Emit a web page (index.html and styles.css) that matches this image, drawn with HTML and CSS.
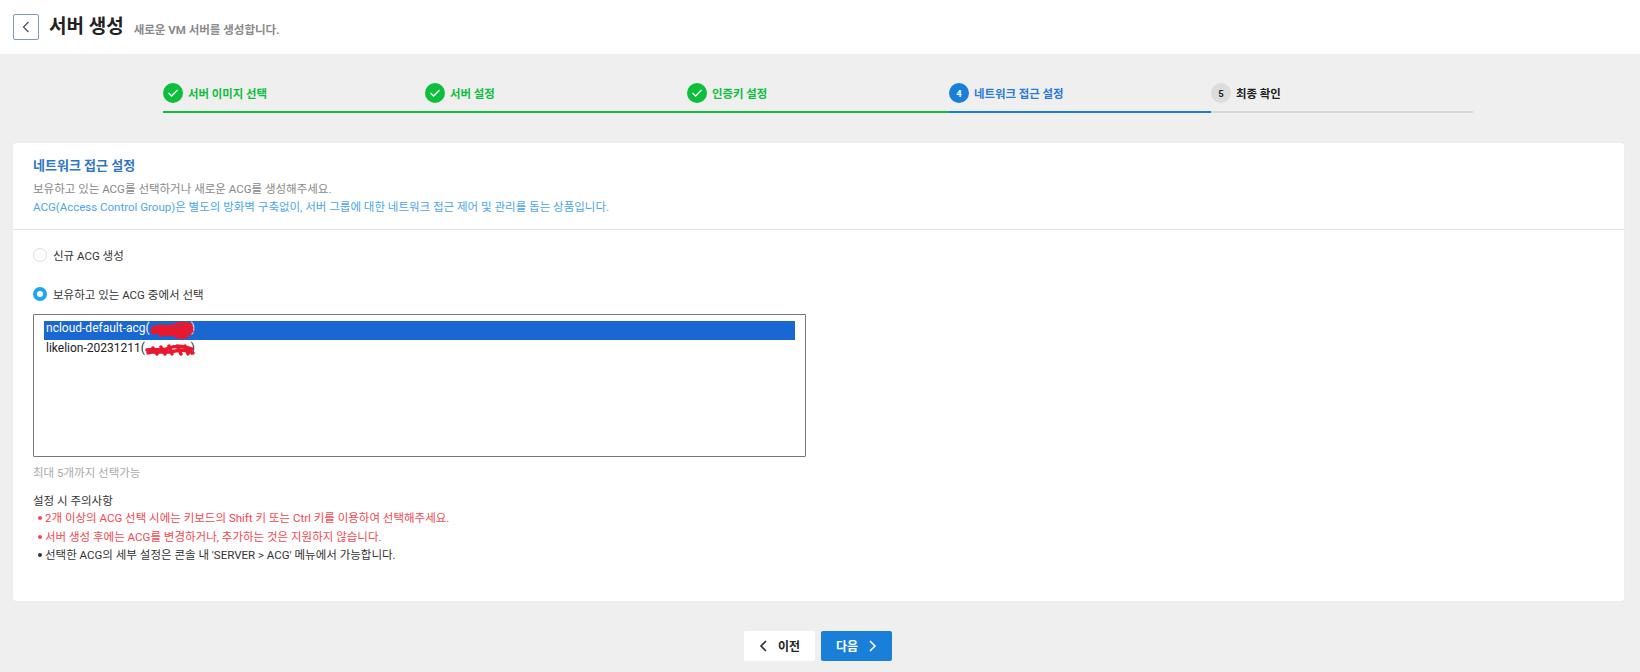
FILE: index.html
```html
<!DOCTYPE html>
<html lang="ko">
<head>
<meta charset="utf-8">
<title>서버 생성</title>
<link rel="stylesheet" href="styles.css">
</head>
<body>
<header class="topbar">
  <button class="back" type="button" aria-label="뒤로">
    <svg width="10" height="14" viewBox="0 0 10 14"><path d="M7.5 2 L2.5 7 L7.5 12" fill="none" stroke="#44505c" stroke-width="1.2"/></svg>
  </button>
  <h1 class="title">서버 생성</h1>
  <span class="subtitle">새로운 VM 서버를 생성합니다.</span>
</header>

<ol class="steps">
  <li class="step done"><span class="badge"><svg width="12" height="10" viewBox="0 0 12 10"><path d="M1.5 5 L4.6 8 L10.5 2" fill="none" stroke="#fff" stroke-width="1.3"/></svg></span>서버 이미지 선택</li>
  <li class="step done"><span class="badge"><svg width="12" height="10" viewBox="0 0 12 10"><path d="M1.5 5 L4.6 8 L10.5 2" fill="none" stroke="#fff" stroke-width="1.3"/></svg></span>서버 설정</li>
  <li class="step done"><span class="badge"><svg width="12" height="10" viewBox="0 0 12 10"><path d="M1.5 5 L4.6 8 L10.5 2" fill="none" stroke="#fff" stroke-width="1.3"/></svg></span>인증키 설정</li>
  <li class="step current"><span class="badge">4</span>네트워크 접근 설정</li>
  <li class="step todo"><span class="badge">5</span>최종 확인</li>
</ol>

<main class="card">
  <section class="card-head">
    <h2 class="card-title">네트워크 접근 설정</h2>
    <p class="desc">보유하고 있는 ACG를 선택하거나 새로운 ACG를 생성해주세요.</p>
    <p class="desc desc-blue">ACG(Access Control Group)은 별도의 방화벽 구축없이, 서버 그룹에 대한 네트워크 접근 제어 및 관리를 돕는 상품입니다.</p>
  </section>
  <section class="card-body">
    <div class="radio"><span class="dot"></span>신규 ACG 생성</div>
    <div class="radio radio-on"><span class="dot"></span>보유하고 있는 ACG 중에서 선택</div>
    <div class="listbox">
      <div class="option selected">ncloud-default-acg(<span class="masked"><svg class="scribble" width="46" height="20" viewBox="0 0 46 20"><path d="M3 8 C10 4 16 8 22 6 C30 2 36 3 41 5 M2 10 C10 7 20 11 30 8 C36 6 40 7 42 8 M3 13 C12 10 22 14 32 11 C36 10 40 10 42 11 M10 15 C16 13 24 16 32 14 C36 13 38 14 40 14 M26 16 C28 17 32 18 36 17 M10 7 L14 15 M18 6 L22 15 M28 4 L32 17 M36 4 L37 15" fill="none" stroke="#e8192f" stroke-width="3.2" stroke-linecap="round"/></svg></span>)</div>
      <div class="option">likelion-20231211(<span class="masked masked-2"><svg class="scribble" width="50" height="14" viewBox="0 0 50 14"><path d="M2 7 C10 5 16 9 24 5 C32 2 40 3 47 6 M3 10 C12 7 20 11 30 8 C36 6 42 7 48 10 M8 5 L12 11 M16 4 L20 11 M24 3 L27 11 M32 3 L36 11 M40 3 L43 11" fill="none" stroke="#e8192f" stroke-width="3.4" stroke-linecap="round"/></svg></span>)</div>
    </div>
    <p class="hint">최대 5개까지 선택가능</p>
    <p class="notes-title">설정 시 주의사항</p>
    <ul class="notes">
      <li class="warn">2개 이상의 ACG 선택 시에는 키보드의 Shift 키 또는 Ctrl 키를 이용하여 선택해주세요.</li>
      <li class="warn">서버 생성 후에는 ACG를 변경하거나, 추가하는 것은 지원하지 않습니다.</li>
      <li>선택한 ACG의 세부 설정은 콘솔 내 'SERVER &gt; ACG' 메뉴에서 가능합니다.</li>
    </ul>
  </section>
</main>

<footer class="actions">
  <button class="btn btn-prev" type="button"><svg width="9" height="12" viewBox="0 0 9 12"><path d="M7 1 L2 6 L7 11" fill="none" stroke="#333" stroke-width="1.6"/></svg>이전</button>
  <button class="btn btn-next" type="button">다음<svg width="9" height="12" viewBox="0 0 9 12"><path d="M2 1 L7 6 L2 11" fill="none" stroke="#fff" stroke-width="1.6"/></svg></button>
</footer>
</body>
</html>
```

FILE: styles.css
```css
* { box-sizing: border-box; }
html, body { margin: 0; padding: 0; }
body {
  width: 1640px;
  height: 672px;
  overflow: hidden;
  background: #efefef;
  font-family: Roboto, "Noto Sans CJK KR", sans-serif;
  color: #222;
}
h1, h2, p, ul, ol { margin: 0; padding: 0; list-style: none; }

.topbar {
  height: 54px;
  background: #fff;
  display: flex;
  align-items: center;
  padding-left: 13px;
}
.back {
  width: 26px;
  height: 26px;
  padding: 0;
  background: #fff;
  border: 1px solid #7f98b8;
  border-radius: 2px;
  display: flex;
  align-items: center;
  justify-content: center;
}
.title { margin-left: 10px; font-size: 19px; font-weight: 700; color: #222; line-height: 26px; }
.subtitle { margin-left: 10px; font-size: 11.5px; font-weight: 700; color: #8a8a8a; padding-top: 3px; }

.steps {
  display: grid;
  grid-template-columns: repeat(5, 262px);
  margin: 29px 0 0 163px;
}
.step {
  display: flex;
  align-items: center;
  gap: 5px;
  height: 30px;
  padding-bottom: 8px;
  border-bottom: 2px solid #d8d8d8;
  font-size: 11.4px;
  font-weight: 700;
}
.badge {
  width: 20px;
  height: 20px;
  border-radius: 50%;
  display: flex;
  align-items: center;
  justify-content: center;
  font-size: 9.5px;
  flex: none;
}
.done { color: #0dbf3c; border-color: #0dbf3c; }
.done .badge { background: #0dbf3c; }
.current { color: #2a7ad4; border-color: #1a7fd9; }
.current .badge { background: #1a7fd9; color: #fff; }
.todo { color: #222; }
.todo .badge { background: #dcdcdc; color: #222; }

.card {
  width: 1611px;
  height: 458px;
  margin: 30px 0 0 13px;
  background: #fff;
  border-radius: 3px;
  box-shadow: 0 0 1px #dcdcdc;
}
.card-head {
  height: 87px;
  padding: 13px 20px 0;
  border-bottom: 1px solid #e2e2e2;
}
.card-title { font-size: 13px; font-weight: 700; color: #2f75c4; line-height: 20px; margin-bottom: 4px; }
.desc { font-size: 11.5px; line-height: 18px; color: #888; }
.desc-blue { color: #4ba6ea; }

.card-body { padding: 16px 20px 0; }
.radio {
  display: flex;
  align-items: center;
  gap: 6px;
  height: 18px;
  font-size: 11.5px;
  color: #333;
  margin-bottom: 21px;
}
.dot {
  width: 14px;
  height: 14px;
  border-radius: 50%;
  border: 1px solid #dcdcdc;
  background: #fff;
  flex: none;
}
.radio-on .dot { border: 4px solid #1ea7ea; }

.listbox {
  width: 773px;
  height: 143px;
  border: 1px solid #767676;
  border-radius: 1px;
  padding: 6px 10px;
  margin-top: -10px;
  font-size: 12px;
  color: #222;
}
.option { height: 19px; line-height: 14px; padding-left: 2px; white-space: nowrap; }
.option.selected { background: #1967d2; color: #fff; margin-bottom: 1px; }
.masked { display: inline-block; width: 41px; height: 14px; position: relative; vertical-align: middle; }
.masked-2 { width: 46px; }
.scribble { position: absolute; left: 0; top: -2px; }
.masked-2 .scribble { top: 1px; }

.hint { margin-top: 8px; font-size: 11.5px; line-height: 16px; color: #aaa; }
.notes-title { margin-top: 12px; font-size: 11.5px; line-height: 16px; color: #333; }
.notes { margin-top: 0; }
.notes li { font-size: 11.5px; line-height: 18.5px; padding-left: 12px; position: relative; color: #333; }
.notes li::before {
  content: "";
  position: absolute;
  left: 5px;
  top: 7px;
  width: 4px;
  height: 4px;
  border-radius: 50%;
  background: currentColor;
}
.notes .warn { color: #f4474f; }

.actions {
  display: flex;
  justify-content: center;
  gap: 6px;
  margin-top: 30px;
  padding-right: 4px;
}
.btn {
  width: 71px;
  height: 30px;
  border: 0;
  border-radius: 2px;
  font-family: inherit;
  font-size: 12px;
  font-weight: 700;
  display: flex;
  align-items: center;
  justify-content: center;
  gap: 10px;
  padding: 0 0 1px;
}
.btn-prev { background: #fff; color: #222; }
.btn-next { background: #1a7fd9; color: #fff; }
```
